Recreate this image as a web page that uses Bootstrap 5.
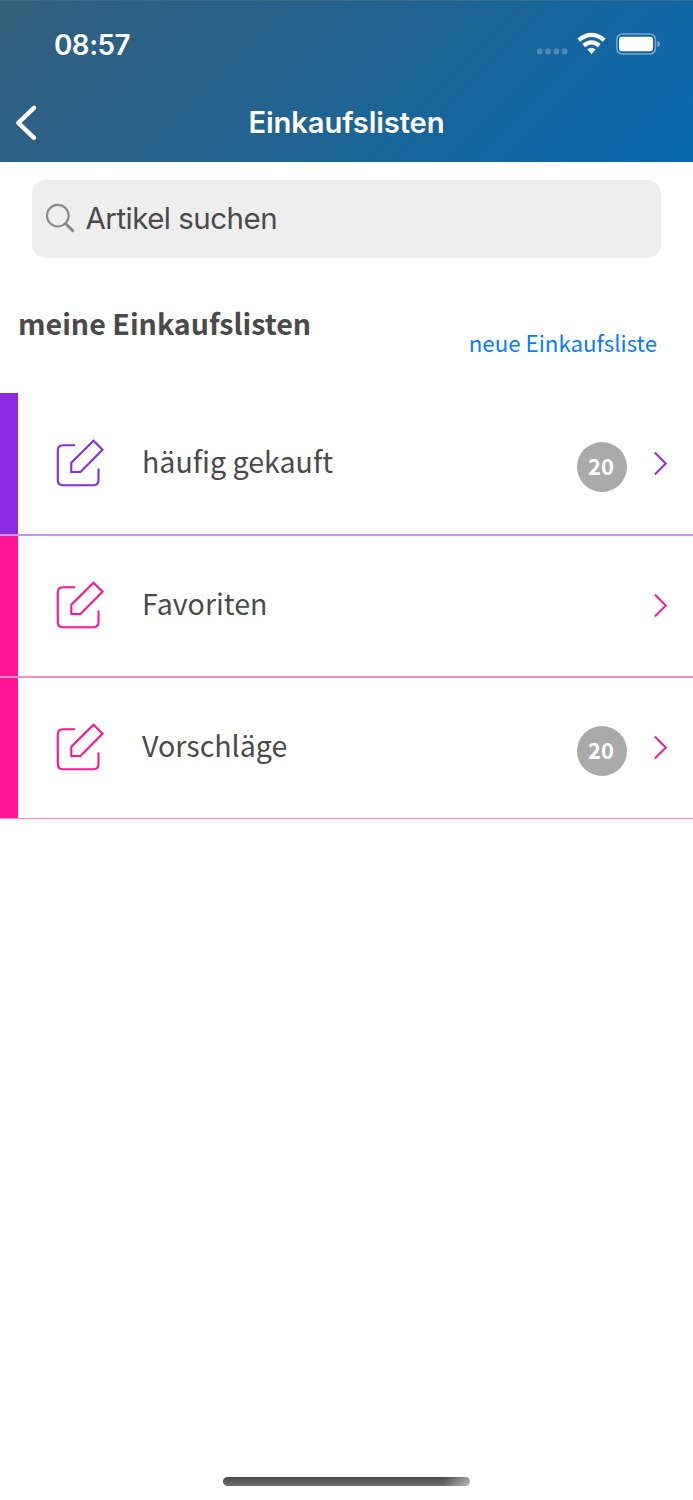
<!DOCTYPE html>
<html lang="de">
<head>
<meta charset="utf-8">
<meta name="viewport" content="width=device-width, initial-scale=1">
<title>Einkaufslisten</title>
<link rel="stylesheet" href="https://cdn.jsdelivr.net/npm/bootstrap@5.3.0/dist/css/bootstrap.min.css">
<style>
  body { font-family: "Noto Sans CJK SC", "Noto Sans", sans-serif; color: #4a4a4a; background: #fff; }
  .screen { height: 1500px; overflow: hidden; }
  .app-header { height: 162px; background: linear-gradient(135deg, #375f7a 0%, #2f6082 12%, #25628d 40%, #19659b 62%, #1067a5 82%, #0669af 100%); font-family: Inter, "Liberation Sans", sans-serif; border-top: 1px solid #3b6d8e; color: #fff; }
  .status-row { height: 87px; padding-left: 54px; }
  .clock { font-size: 27.8px; font-weight: 600; line-height: 89px; letter-spacing: -.5px; }
  .title-row { height: 70px; display: grid; grid-template-columns: 60px 1fr 60px; }
  .title-row h1 { font-size: 29.2px; font-weight: 600; line-height: 70px; letter-spacing: -.12px; }
  .search-box { height: 78px; margin: 18px 32px 0; border-radius: 14px; background: #eee; font-family: Inter, "Liberation Sans", sans-serif; }
  .search-box span { font-size: 29.5px; line-height: 76px; letter-spacing: -.52px; margin-left: -.5px; }
  .list-head { height: 135px; padding: 0 36px 0 18px; }
  .list-head h2 { font-size: 28.6px; font-weight: 700; line-height: 40px; margin-top: 45px; }
  .list-head a { font-size: 22.3px; line-height: 32px; color: #087cff; margin-top: 68px; }
  .entry { height: 142px; border-left: 18px solid var(--tone); color: var(--tone); position: relative; }
  .entry::after { content: ""; position: absolute; z-index: 1; left: -18px; right: 0; bottom: -1px; height: 2px; background: var(--rule); }
  .entry:last-child::after { bottom: 0; height: 1px; }
  .violet { --tone: #8a2be2; --rule: #c595f1; }
  .pink { --tone: #ff1493; --rule: #ff8aca; }
  .entry-icon { margin-left: 38px; }
  .entry-name { font-size: 28.6px; line-height: 40px; color: #4a4a4a; margin-left: 36px; margin-top: -7px; }
  .count { width: 50px; height: 50px; background: #aaa; color: #fff; font-size: 22px; font-weight: 700; line-height: 46px; margin-right: 26px; margin-top: 5px; padding-right: 2px; }
  .home-bar { width: 247px; height: 9px; border-radius: 5px; background: linear-gradient(100deg, transparent 89%, rgba(255,255,255,.5) 100%), linear-gradient(#484848, #707070); margin-bottom: 14px; }
</style>
</head>
<body>
<svg class="d-none">
  <symbol id="edit" viewBox="0 0 50 50"><g fill="none" stroke="currentColor" stroke-width="2.100"><path d="M19 6.200H7Q1.800 6.200 1.800 11.400V41Q1.800 46.200 7 46.200H37.300Q42.500 46.200 42.500 41V29.500"/><path d="M37.500 1.800L46.500 10.800L24.500 33H15.300V23.800Z"/></g></symbol>
  <symbol id="next" viewBox="0 0 16 26"><path d="M1.800 1.500L12.800 12.500L1.800 23.500" fill="none" stroke="currentColor" stroke-width="1.900"/></symbol>
</svg>
<div class="screen d-flex flex-column">
  <header class="app-header">
    <div class="status-row d-flex">
      <span class="clock">08:57</span>
      <svg class="ms-auto" width="157" height="87" viewBox="536 1 157 87">
        <g fill="#fff" fill-opacity=".25"><rect x="537" y="48.500" width="5.500" height="5.800" rx="1.800"/><rect x="545.300" y="48.500" width="5.500" height="5.800" rx="1.800"/><rect x="553.600" y="48.500" width="5.500" height="5.800" rx="1.800"/><rect x="561.900" y="48.500" width="5.500" height="5.800" rx="1.800"/></g>
        <g fill="none" stroke="#fff" stroke-width="4.200"><path d="M578.700 40.100Q591.500 29.500 604.300 40.100"/><path d="M583.700 45.600Q591.500 39.200 599.300 45.600"/></g>
        <path d="M587.300 49.400Q591.500 46 595.700 49.400L591.500 54Z" fill="#fff"/>
        <rect x="616.800" y="34" width="38.600" height="20" rx="5.500" fill="none" stroke="#fff" stroke-opacity=".42" stroke-width="1.600"/>
        <rect x="619" y="36.700" width="34" height="14.500" rx="3" fill="#fff"/>
        <path d="M657.500 40.800Q660 42 660 44T657.500 47.200Z" fill="#fff" fill-opacity=".5"/>
      </svg>
    </div>
    <nav class="title-row">
      <svg width="60" height="70" viewBox="0 88 60 70" role="img" aria-label="Zurück"><path d="M34 107.800L18.300 122.800L34 137.800" fill="none" stroke="#fff" stroke-width="4.400" stroke-linecap="round" stroke-linejoin="round"/></svg>
      <h1 class="m-0 text-center">Einkaufslisten</h1>
    </nav>
  </header>
  <div class="search-box d-flex flex-shrink-0">
    <svg width="54" height="78" viewBox="32 180 54 78" fill="none" stroke="#8a8a8d"><circle cx="57.800" cy="215.700" r="10.800" stroke-width="2.100"/><path d="M65.800 223.700L72.700 230.600" stroke-width="3" stroke-linecap="round"/></svg>
    <span>Artikel suchen</span>
  </div>
  <div class="list-head d-flex justify-content-between flex-shrink-0">
    <h2 class="mb-0">meine Einkaufslisten</h2>
    <a href="#" class="text-decoration-none">neue Einkaufsliste</a>
  </div>
  <main>
    <div class="entry violet d-flex align-items-center"><svg class="entry-icon" width="50" height="50"><use href="#edit"/></svg><span class="entry-name">häufig gekauft</span><span class="count rounded-circle text-center ms-auto">20</span><svg class="me-4" width="16" height="26"><use href="#next"/></svg></div>
    <div class="entry pink d-flex align-items-center"><svg class="entry-icon" width="50" height="50"><use href="#edit"/></svg><span class="entry-name">Favoriten</span><svg class="ms-auto me-4" width="16" height="26"><use href="#next"/></svg></div>
    <div class="entry pink d-flex align-items-center"><svg class="entry-icon" width="50" height="50"><use href="#edit"/></svg><span class="entry-name">Vorschläge</span><span class="count rounded-circle text-center ms-auto">20</span><svg class="me-4" width="16" height="26"><use href="#next"/></svg></div>
  </main>
  <div class="home-bar mx-auto mt-auto"></div>
</div>
<script src="https://cdn.jsdelivr.net/npm/bootstrap@5.3.0/dist/js/bootstrap.bundle.min.js"></script>
</body>
</html>
